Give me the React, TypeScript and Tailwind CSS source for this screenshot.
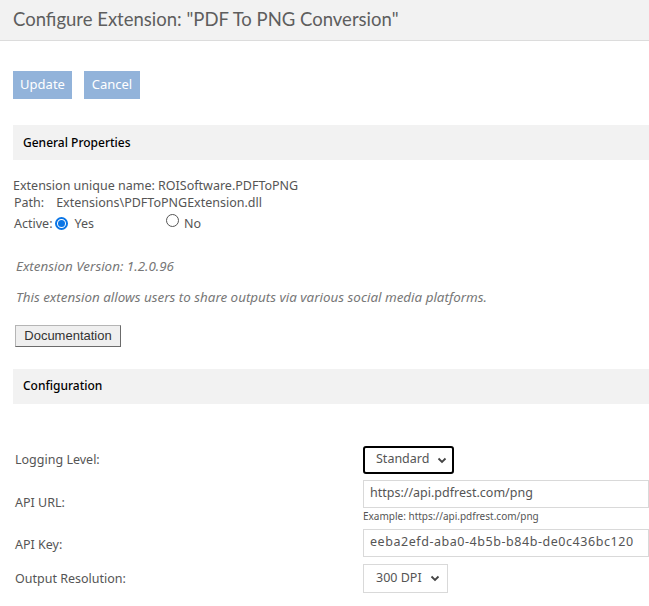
import React from "react";

const font = { fontFamily: "'Noto Sans', 'Open Sans', sans-serif" };

function SectionBar({ title }: { title: string }) {
    return (
        <div className="flex h-[35px] items-center bg-[#f2f2f2] pl-[10px] text-[12px] font-medium text-black">
            {title}
        </div>
    );
}

function Chevron() {
    return (
        <svg width="10" height="10" viewBox="0 0 10 10" className="ml-2 shrink-0">
            <path d="M1.5 3.5 L5 7 L8.5 3.5" fill="none" stroke="#444" strokeWidth="1.8" />
        </svg>
    );
}

function Radio({ checked }: { checked: boolean }) {
    return checked ? (
        <span className="inline-flex h-[13px] w-[13px] items-center justify-center rounded-full border-2 border-[#0a75e6] bg-white">
            <span className="h-[7px] w-[7px] rounded-full bg-[#0a75e6]" />
        </span>
    ) : (
        <span className="inline-block h-[13px] w-[13px] rounded-full border border-[#555] bg-white" />
    );
}

export default function App() {
    return (
        <div className="min-h-[606px] w-[649px] overflow-hidden bg-white text-[#555]" style={font}>
            <div
                className="flex h-[41px] items-center border-b border-[#dcdcdc] bg-[#f2f2f2] pl-[13px] text-[18.5px] text-[#5e5e5e]"
                style={{ fontFamily: "Lato, 'Noto Sans', sans-serif" }}
            >
                Configure Extension: "PDF To PNG Conversion"
            </div>

            <div className="flex gap-[12px] pl-[13px] pt-[30px]">
                <button className="h-[28px] w-[59px] bg-[#92b3da] text-[13px] text-white">Update</button>
                <button className="h-[28px] w-[56px] bg-[#92b3da] text-[13px] text-white">Cancel</button>
            </div>

            <div className="ml-[13px] mt-[26px]">
                <SectionBar title="General Properties" />
            </div>

            <div className="pl-[13px] pt-[17px] text-[12.5px] leading-[17px]">
                <div>Extension unique name: ROISoftware.PDFToPNG</div>
                <div className="pl-[1px]">
                    Path:<span className="ml-[12px]">Extensions\PDFToPNGExtension.dll</span>
                </div>
                <div className="mt-[4px] flex items-center pl-[1px]">
                    <span>Active:</span>
                    <span className="ml-[3px] mt-[-2px]"><Radio checked /></span>
                    <span className="ml-[6px]">Yes</span>
                    <span className="ml-[72px] mt-[-2px]"><Radio checked={false} /></span>
                    <span className="ml-[5px]">No</span>
                </div>
            </div>

            <div className="pl-[16px] pt-[26px] text-[13.4px] italic leading-[17px] text-[#777]">
                <div>Extension Version: 1.2.0.96</div>
                <div className="mt-[14px]">This extension allows users to share outputs via various social media platforms.</div>
            </div>

            <div className="pl-[15px] pt-[16px]">
                <button
                    className="h-[22px] w-[106px] border border-[#b5b5b5] border-b-[#6b6b6b] border-r-[#6b6b6b] bg-[#efefef] text-[13px] text-[#333]"
                    style={{ fontFamily: "'Liberation Sans', Arial, sans-serif" }}
                >
                    Documentation
                </button>
            </div>

            <div className="ml-[13px] mt-[22px]">
                <SectionBar title="Configuration" />
            </div>

            <div className="grid grid-cols-[348px_1fr] items-center pl-[15px] pt-[42px] text-[12.5px]">
                <div className="pt-[2px]">Logging Level:</div>
                <div className="flex h-[28px]">
                    <div className="flex w-[91px] items-center rounded-[3px] border-2 border-black pl-[11px] pr-[7px] text-[#555]">
                        <span>Standard</span>
                        <Chevron />
                    </div>
                </div>

                <div className="pt-[10px]">API URL:</div>
                <div className="mt-[6px]">
                    <div className="flex h-[28px] items-center border border-[#d9d9d9] pl-[6px] text-[#555]">
                        https://api.pdfrest.com/png
                    </div>
                    <div className="pt-[1px] text-[10px] leading-[14px] text-[#555]">Example: https://api.pdfrest.com/png</div>
                </div>

                <div className="pt-[12px]">API Key:</div>
                <div className="mt-[6px] flex h-[28px] items-center border border-[#d9d9d9] pl-[6px] tracking-[0.55px] text-[#555]">
                    eeba2efd-aba0-4b5b-b84b-de0c436bc120
                </div>

                <div className="pt-[9px]">Output Resolution:</div>
                <div className="mt-[7px] flex h-[29px]">
                    <div className="flex w-[85px] items-center border border-[#d9d9d9] pl-[12px] text-[#555]">
                        <span>300 DPI</span>
                        <Chevron />
                    </div>
                </div>
            </div>
        </div>
    );
}
